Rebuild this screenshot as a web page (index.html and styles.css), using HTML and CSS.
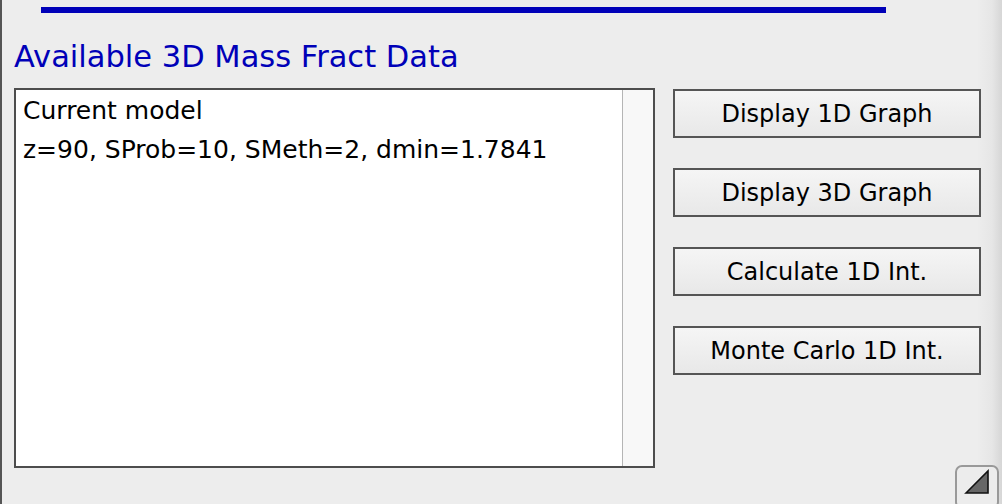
FILE: index.html
```html
<!DOCTYPE html>
<html>
<head>
<meta charset="utf-8">
<link rel="stylesheet" href="styles.css">
</head>
<body>
<div class="window">
  <div class="bar"></div>
  <h1 class="title">Available 3D Mass Fract Data</h1>
  <div class="content">
    <div class="listbox">
      <div class="items">
        <div class="item">Current model</div>
        <div class="item">z=90, SProb=10, SMeth=2, dmin=1.7841</div>
      </div>
      <div class="scrolltrack"></div>
    </div>
    <div class="buttons">
      <div class="btn">Display 1D Graph</div>
      <div class="btn">Display 3D Graph</div>
      <div class="btn">Calculate 1D Int.</div>
      <div class="btn">Monte Carlo 1D Int.</div>
    </div>
  </div>
  <div class="grip">
    <svg width="26" height="27" viewBox="0 0 26 27"><polygon points="2,25 24,3 24,25" fill="#666" stroke="#111" stroke-width="1.6" stroke-linejoin="miter"/></svg>
  </div>
</div>
</body>
</html>
```
FILE: styles.css
```css
html, body {
  margin: 0;
  padding: 0;
}
body {
  width: 1002px;
  height: 504px;
  overflow: hidden;
  background: #ededed;
  font-family: "DejaVu Sans", "Liberation Sans", sans-serif;
}
.window {
  position: relative;
  box-sizing: border-box;
  width: 1002px;
  height: 504px;
  border-left: 2px solid #555;
  background: linear-gradient(to right, #ededed 0, #ededed 975px, #e6e6e6 990px, #d6d6d6 1000px);
  padding-top: 7px;
}
.bar {
  margin-left: 39px;
  width: 845px;
  height: 6px;
  background: #0000b8;
}
.title {
  margin: 27px 0 0 12px;
  font-weight: normal;
  font-size: 30.5px;
  line-height: 34px;
  height: 34px;
  color: #0000b8;
  white-space: nowrap;
}
.content {
  display: flex;
  margin-top: 14px;
  margin-left: 12px;
}
.listbox {
  display: flex;
  box-sizing: border-box;
  width: 641px;
  height: 380px;
  border: 2px solid #4d4d4d;
  background: #fff;
}
.items {
  flex: 1;
  padding: 5px 0 0 7px;
}
.item {
  font-size: 25px;
  line-height: 32px;
  height: 39px;
  color: #000;
  white-space: nowrap;
}
.scrolltrack {
  width: 30px;
  border-left: 1px solid #b5b5b5;
  background: #f8f8f8;
}
.buttons {
  display: flex;
  flex-direction: column;
  gap: 30px;
  margin-left: 18px;
  margin-top: 1px;
}
.btn {
  box-sizing: border-box;
  width: 308px;
  height: 49px;
  border: 2px solid #555;
  background: linear-gradient(to bottom, #f5f5f5, #e8e8e8);
  font-size: 24px;
  display: flex;
  align-items: center;
  justify-content: center;
  color: #000;
  white-space: nowrap;
}
.grip {
  position: absolute;
  left: 953px;
  top: 465px;
  width: 44px;
  height: 44px;
  box-sizing: border-box;
  border: 2px solid #999;
  border-radius: 7px;
  background: #ececec;
  display: flex;
  align-items: flex-start;
  justify-content: center;
  padding-top: 1px;
}
```
